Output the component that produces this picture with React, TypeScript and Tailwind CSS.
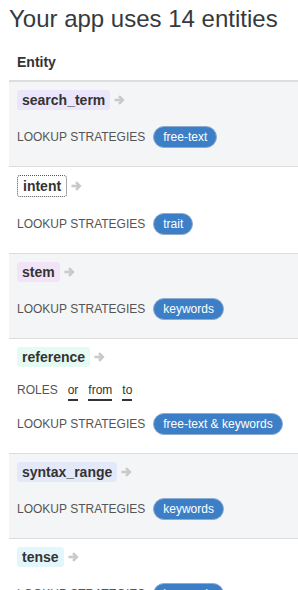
import React from 'react';

type Entity = {
  name: string;
  chip: string;
  roles?: string[];
  strategies: string;
};

const entities: Entity[] = [
  { name: 'search_term', chip: 'bg-[#ebe6fb]', strategies: 'free-text' },
  { name: 'intent', chip: 'bg-white border border-dotted border-[#555]', strategies: 'trait' },
  { name: 'stem', chip: 'bg-[#f3e3f7]', strategies: 'keywords' },
  { name: 'reference', chip: 'bg-[#e4faf2]', roles: ['or', 'from', 'to'], strategies: 'free-text & keywords' },
  { name: 'syntax_range', chip: 'bg-[#e3e9f8]', strategies: 'keywords' },
  { name: 'tense', chip: 'bg-[#e3f6fc]', strategies: 'keywords' },
];

const Arrow = () => (
  <svg width="11" height="10" viewBox="0 0 11 10" className="shrink-0">
    <path d="M0.5 5h7.5" stroke="#c9c9c9" strokeWidth="2.6" fill="none" />
    <path d="M5 1.2L8.8 5 5 8.8" stroke="#c9c9c9" strokeWidth="2.6" fill="none" strokeLinejoin="miter" />
  </svg>
);

export default function App() {
  return (
    <div className="w-[298px] h-[590px] overflow-hidden bg-white pl-[9px] text-[#333] font-['Liberation_Sans',Arial,sans-serif]">
      <h1 className="mt-[6px] mb-[12px] text-[24px] leading-[1.1] font-normal text-[#343a40]">Your app uses 14 entities</h1>

      <table className="w-full border-collapse">
        <thead>
          <tr className="border-b-2 border-[#ddd]">
            <th className="p-2 text-left text-[14px] leading-[20px] font-bold">Entity</th>
          </tr>
        </thead>
        <tbody>
          {entities.map((e, i) => (
            <tr key={e.name} className={`border-b border-[#ddd] ${i % 2 === 0 ? 'bg-[#f4f5f7]' : 'bg-white'}`}>
              <td className="p-2 align-top">
                <div className="flex items-center gap-[4px]">
                  <span className={`${e.chip} px-[5px] rounded-[3px] text-[14px] leading-[20px] font-bold`}>{e.name}</span>
                  <Arrow />
                </div>

                {e.roles && (
                  <div className="mt-[15px] flex items-start gap-[10px] text-[12px]">
                    <span className="leading-[17px] text-[#555]">ROLES</span>
                    {e.roles.map(r => (
                      <span key={r} className="leading-[17px] border-b-2 border-[#333] text-[#333]">{r}</span>
                    ))}
                  </div>
                )}

                <div className={`${e.roles ? 'mt-3' : 'mt-4'} mb-[10px] flex items-center gap-[8px]`}>
                  <span className="text-[12px] text-[#555]">LOOKUP STRATEGIES</span>
                  <span className="h-[22px] flex items-center px-[9px] rounded-full bg-[#3d7fc6] border border-[#8fabcf] text-white text-[12px] whitespace-nowrap">
                    {e.strategies}
                  </span>
                </div>
              </td>
            </tr>
          ))}
        </tbody>
      </table>
    </div>
  );
}
